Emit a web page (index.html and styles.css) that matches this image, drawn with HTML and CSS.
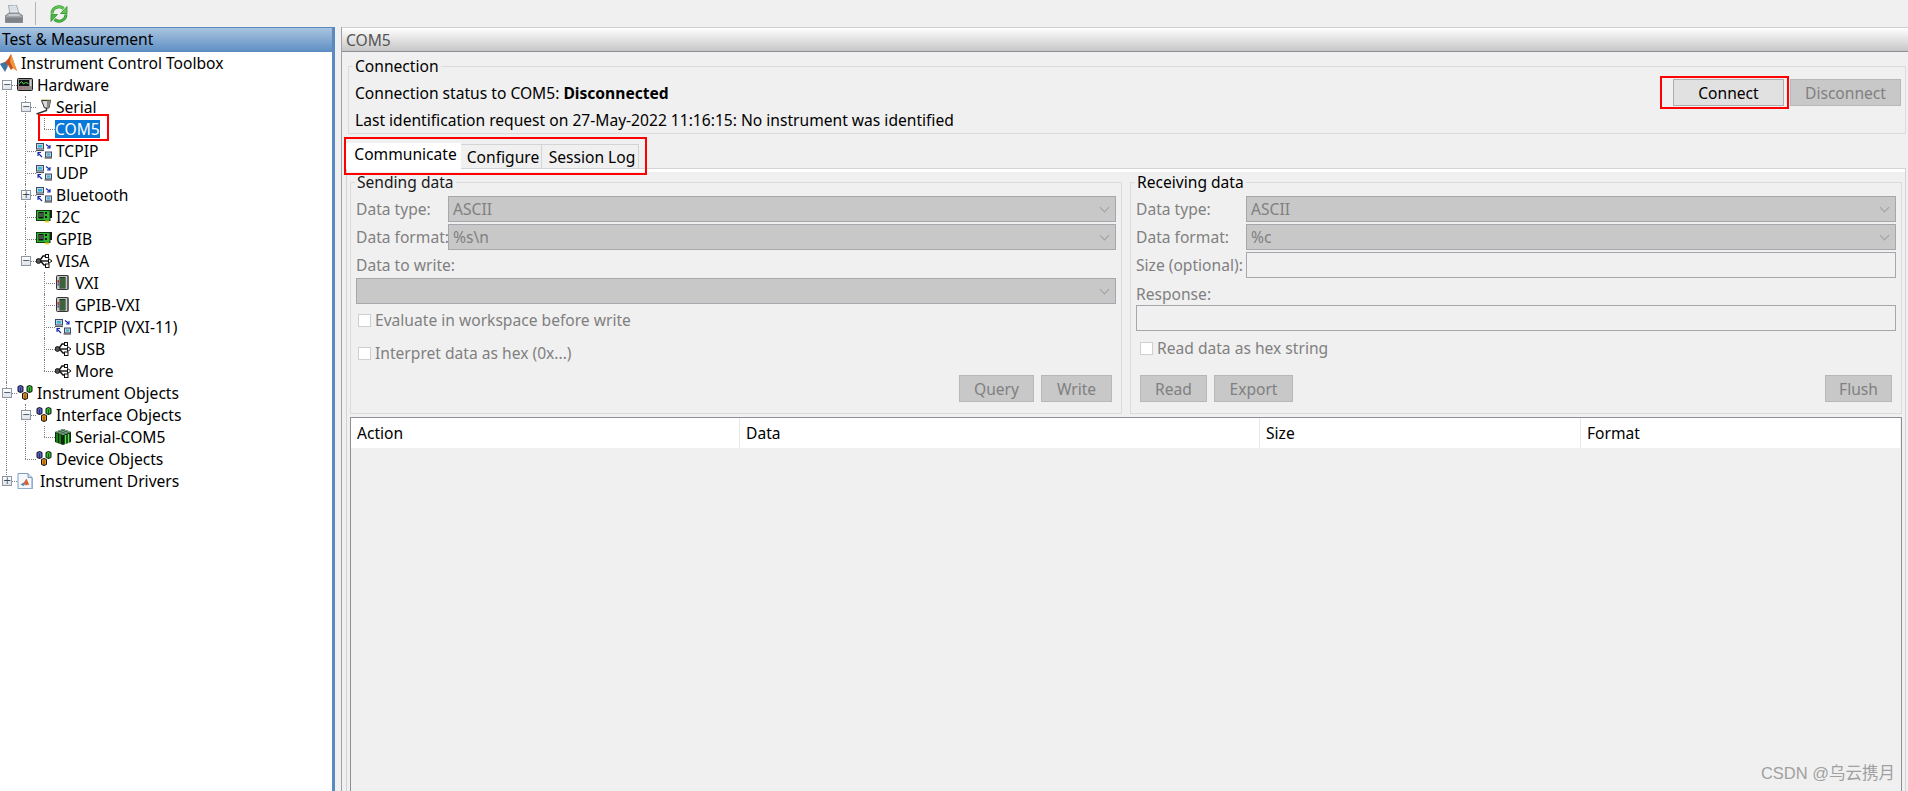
FILE: index.html
```html
<!DOCTYPE html>
<html lang="en">
  <head>
    <meta charset="utf-8">
    <title>Test &amp; Measurement</title>
    <link rel="stylesheet" href="styles.css">
  </head>
  <body>
    <svg class="defs" aria-hidden="true">
      <symbol id="i-print" viewBox="0 0 18 18">
        <path d="M3.5 .5l8-.5 2.5 9H5z" fill="#e3e9ef" stroke="#8d949c" stroke-width=".8"/>
        <path d="M5 3l6-.3M5.5 5l6-.3" stroke="#c3ccd6" stroke-width=".7"/>
        <path d="M0 11l4-3h10l4 3v6l-1.500 1H1.500L0 17z" fill="#a4a8ad" stroke="#74787e" stroke-width=".8"/>
        <path d="M.5 12.500h17V17l-1 .6H1.500L.5 17z" fill="#7f8389"/>
        <path d="M3.500 10h11" stroke="#e0e3e6" stroke-width="1.200"/>
      </symbol>
      <symbol id="i-refresh" viewBox="0 0 18 18">
        <path d="M2 8.500A7 7 0 0 1 13.500 3.500" fill="none" stroke="#2f8f2c" stroke-width="3"/>
        <path d="M2 8.500A7 7 0 0 1 13.500 3.500" fill="none" stroke="#5fc552" stroke-width="1.800"/>
        <path d="M17 1.500V8.500h-6.500z" fill="#5fc552" stroke="#2f8f2c" stroke-width=".8"/>
        <path d="M16 9.500A7 7 0 0 1 4.500 14.500" fill="none" stroke="#2f8f2c" stroke-width="3"/>
        <path d="M16 9.500A7 7 0 0 1 4.500 14.500" fill="none" stroke="#4ab544" stroke-width="1.800"/>
        <path d="M1 16.500V9.500h6.500z" fill="#4ab544" stroke="#2f8f2c" stroke-width=".8"/>
      </symbol>
      <symbol id="i-matlab" viewBox="0 0 17 18">
        <path d="M0 10l5-2 3-3 3-5 6 17-4-3-2 2-3-5-3 1z" fill="#c8501e"/>
        <path d="M11 0l6 17-4-3-3-6z" fill="#f0983a"/>
        <path d="M0 10l5-2 3 4-3 6z" fill="#3f76a8"/>
      </symbol>
      <symbol id="i-hw" viewBox="0 0 16 16">
        <rect x=".5" y="1.500" width="15" height="12" rx="1" fill="#8f8f8f" stroke="#1a1a1a"/>
        <rect x="2" y="3" width="10" height="6" fill="#101010"/>
        <path d="M2.500 6.500l2-2 2 2.500 2-1.500 3 1" fill="none" stroke="#4fe04f"/>
        <path d="M2 11h3M7 11h1M10 11h1" stroke="#e04040"/>
        <rect x="13" y="3" width="1.500" height="6" fill="#d0d0d0"/>
      </symbol>
      <symbol id="i-serial" viewBox="0 0 16 16">
        <path d="M5.500 1.500h9L13 9H8.500z" fill="#d8d8d8" stroke="#333"/>
        <path d="M11 1.500h3.500L13 9h-2z" fill="#8a8a8a"/>
        <path d="M5.500 .5h9" stroke="#c9b93a" stroke-dasharray="1 1"/>
        <path d="M10.500 9v2.500L.5 15" fill="none" stroke="#333" stroke-width="1.400"/>
      </symbol>
      <symbol id="i-net" viewBox="0 0 16 16">
        <rect x=".5" y=".5" width="7" height="5.500" fill="#c8cfd8" stroke="#3a4a6a"/>
        <rect x="2" y="2" width="4" height="2.500" fill="#30b8d8"/>
        <path d="M0 7.500h8" stroke="#555" stroke-width="1.200"/>
        <rect x="9.500" y="9" width="6" height="5" fill="#c8cfd8" stroke="#3a4a6a"/>
        <rect x="11" y="10.500" width="3" height="2" fill="#30b8d8"/>
        <path d="M8.500 15h7.500" stroke="#555" stroke-width="1.200"/>
        <path d="M10 1.500l4 3M14 2v3h-3M6 14L2 10M2 13V9.500h3" fill="none" stroke="#1428b0" stroke-width="1.100"/>
      </symbol>
      <symbol id="i-chip" viewBox="0 0 16 16">
        <rect x=".5" y="1.500" width="13.500" height="10" fill="#2fb52f" stroke="#103a10"/>
        <rect x="2.500" y="3" width="5" height="6.500" fill="#111"/>
        <path d="M3 5h4M3 7h4" stroke="#ddd" stroke-width=".6"/>
        <rect x="9" y="3" width="2" height="2" fill="#111"/>
        <rect x="9" y="7" width="2" height="2" fill="#111"/>
        <rect x="14" y="1" width="2" height="8" fill="#1a1a1a"/>
        <path d="M9 12.500h4" stroke="#e8d820" stroke-width="2"/>
      </symbol>
      <symbol id="i-usb" viewBox="0 0 16 16">
        <path d="M1 8h13" stroke="#111" stroke-width="1.400"/>
        <path d="M3.500 8l3.500-5h3M4.500 8l3.500 4h2" fill="none" stroke="#111" stroke-width="1.400"/>
        <circle cx="2.500" cy="8" r="2.400" fill="#555" stroke="#111"/>
        <path d="M12.500 5.500L16 8l-3.500 2.500z" fill="#fff" stroke="#111"/>
        <rect x="9.500" y="1.500" width="3" height="3" fill="#fff" stroke="#111"/>
        <rect x="9.500" y="11" width="3.500" height="3.500" fill="#fff" stroke="#111"/>
      </symbol>
      <symbol id="i-vxi" viewBox="0 0 16 16">
        <rect x="1.500" y=".5" width="12" height="14" rx="1" fill="#c4c4c4" stroke="#333"/>
        <rect x="4.500" y="2" width="6" height="11.500" fill="#1c3a1c"/>
        <path d="M5 4h5M5 6h5M5 8h5M5 10h5M5 12h5" stroke="#7fb07f" stroke-width=".7"/>
        <rect x="2.500" y="5" width="1.500" height="3" fill="#d03030"/>
        <rect x="2.500" y="8.500" width="1.500" height="2" fill="#3050c0"/>
        <rect x="12" y="1" width="2" height="13" fill="#666"/>
      </symbol>
      <symbol id="i-objs" viewBox="0 0 16 16">
        <path d="M1 1.500l2.500-1 2.500 1v5l-2.500 1-2.500-1z" fill="#5a5ed0" stroke="#111"/>
        <path d="M10 1.500l2.500-1 2.500 1v5l-2.500 1-2.500-1z" fill="#2fc02f" stroke="#111"/>
        <path d="M5.500 8.500l2.500-1 2.500 1v5l-2.500 1-2.500-1z" fill="#e8921f" stroke="#111"/>
        <path d="M3.500 2.500v5M12.500 2.500v5M8 9.500v5" stroke="#111" stroke-width=".6"/>
      </symbol>
      <symbol id="i-cube" viewBox="0 0 16 16">
        <path d="M0 3l8-3 8 3v10l-8 3-8-3z" fill="#0d2a0d"/>
        <path d="M0 3l8-3 8 3-8 3z" fill="#8fb59a"/>
        <path d="M3 1.800l8 3.200M6 .8l8 3.200M10 .8L2 4M13 1.800L5 5" stroke="#1e4a28" stroke-width=".6"/>
        <path d="M2 4.500v9M5 5.500v9.500" stroke="#1fae1f" stroke-width="1.300"/>
        <path d="M10.500 6v9M13.500 5v9" stroke="#55ea4f" stroke-width="1.500"/>
      </symbol>
      <symbol id="i-mdoc" viewBox="0 0 16 16">
        <path d="M1 .5h10l4 4v11H1z" fill="#f4f8fc" stroke="#7f9dbc"/>
        <path d="M11 .5v4h4" fill="#cbd9e8" stroke="#7f9dbc"/>
        <path d="M3.500 11.500l3.500-2 2.500-4 3 7-1.500-1-2 1-2-2z" fill="#d9602a"/>
        <path d="M3.500 11.500l3.500-2 1 2-1.500 1.500z" fill="#5c88b4"/>
        <path d="M15.500 5v10.500H2" fill="none" stroke="#8fb0d2" stroke-width="1.200"/>
      </symbol>
    </svg>

    <div class="toolbar">
      <svg class="tool-icon"><use href="#i-print"/></svg>
      <span class="tool-sep"></span>
      <svg class="tool-icon"><use href="#i-refresh"/></svg>
    </div>

    <div class="desktop">
      <div class="browser">
        <div class="browser-title">Test &amp; Measurement</div>
        <div class="tree-root"><svg class="logo"><use href="#i-matlab"/></svg><span>Instrument Control Toolbox</span></div>
        <ul class="tree top">
          <li>
            <div class="node"><b class="exp">&minus;</b><svg class="icon"><use href="#i-hw"/></svg><span>Hardware</span></div>
            <ul class="tree">
              <li>
                <div class="node"><b class="exp">&minus;</b><svg class="icon"><use href="#i-serial"/></svg><span>Serial</span></div>
                <ul class="tree">
                  <li><div class="node marked"><span class="selected">COM5</span></div></li>
                </ul>
              </li>
              <li><div class="node"><svg class="icon"><use href="#i-net"/></svg><span>TCPIP</span></div></li>
              <li><div class="node"><svg class="icon"><use href="#i-net"/></svg><span>UDP</span></div></li>
              <li><div class="node"><b class="exp">+</b><svg class="icon"><use href="#i-net"/></svg><span>Bluetooth</span></div></li>
              <li><div class="node"><svg class="icon"><use href="#i-chip"/></svg><span>I2C</span></div></li>
              <li><div class="node"><svg class="icon"><use href="#i-chip"/></svg><span>GPIB</span></div></li>
              <li>
                <div class="node"><b class="exp">&minus;</b><svg class="icon"><use href="#i-usb"/></svg><span>VISA</span></div>
                <ul class="tree">
                  <li><div class="node"><svg class="icon"><use href="#i-vxi"/></svg><span>VXI</span></div></li>
                  <li><div class="node"><svg class="icon"><use href="#i-vxi"/></svg><span>GPIB-VXI</span></div></li>
                  <li><div class="node"><svg class="icon"><use href="#i-net"/></svg><span>TCPIP (VXI-11)</span></div></li>
                  <li><div class="node"><svg class="icon"><use href="#i-usb"/></svg><span>USB</span></div></li>
                  <li><div class="node"><svg class="icon"><use href="#i-usb"/></svg><span>More</span></div></li>
                </ul>
              </li>
            </ul>
          </li>
          <li>
            <div class="node"><b class="exp">&minus;</b><svg class="icon"><use href="#i-objs"/></svg><span>Instrument Objects</span></div>
            <ul class="tree">
              <li>
                <div class="node"><b class="exp">&minus;</b><svg class="icon"><use href="#i-objs"/></svg><span>Interface Objects</span></div>
                <ul class="tree">
                  <li><div class="node"><svg class="icon"><use href="#i-cube"/></svg><span>Serial-COM5</span></div></li>
                </ul>
              </li>
              <li><div class="node"><svg class="icon"><use href="#i-objs"/></svg><span>Device Objects</span></div></li>
            </ul>
          </li>
          <li>
            <div class="node wide"><b class="exp">+</b><svg class="icon"><use href="#i-mdoc"/></svg><span>Instrument Drivers</span></div>
          </li>
        </ul>
      </div>

      <div class="detail">
        <div class="detail-title">COM5</div>
        <div class="detail-body">
          <fieldset class="group connection">
            <legend>Connection</legend>
            <div class="status-row">
              <span>Connection status to COM5: <strong>Disconnected</strong></span>
              <div class="conn-buttons">
                <button class="btn connect">Connect</button>
                <button class="btn off disconnect">Disconnect</button>
              </div>
            </div>
            <div class="last-id">Last identification request on 27-May-2022 11:16:15: No instrument was identified</div>
          </fieldset>

          <div class="tabs">
            <span class="tab active">Communicate</span>
            <span class="tab tab-config">Configure</span>
            <span class="tab tab-log">Session Log</span>
          </div>

          <div class="pane">
            <div class="columns">
              <fieldset class="group io send">
                <legend>Sending data</legend>
                <div class="field"><label>Data type:</label><div class="select">ASCII</div></div>
                <div class="field"><label>Data format:</label><div class="select">%s\n</div></div>
                <div class="caption">Data to write:</div>
                <div class="select"></div>
                <div class="check first"><i class="box"></i>Evaluate in workspace before write</div>
                <div class="check second"><i class="box"></i>Interpret data as hex (0x...)</div>
                <div class="actions end">
                  <button class="btn off query">Query</button>
                  <button class="btn off write">Write</button>
                </div>
              </fieldset>

              <fieldset class="group io receive">
                <legend>Receiving data</legend>
                <div class="field"><label>Data type:</label><div class="select">ASCII</div></div>
                <div class="field"><label>Data format:</label><div class="select">%c</div></div>
                <div class="field"><label>Size (optional):</label><div class="input"></div></div>
                <div class="caption">Response:</div>
                <div class="input"></div>
                <div class="check read-hex"><i class="box"></i>Read data as hex string</div>
                <div class="actions read-actions">
                  <button class="btn off read">Read</button>
                  <button class="btn off export">Export</button>
                  <button class="btn off flush">Flush</button>
                </div>
              </fieldset>
            </div>

            <div class="log">
              <div class="log-head">
                <span class="col-action">Action</span>
                <span class="col-data">Data</span>
                <span class="col-size">Size</span>
                <span class="col-format">Format</span>
              </div>
            </div>
          </div>
        </div>
      </div>
    </div>

    <div class="watermark">CSDN @乌云携月</div>
  </body>
</html>
```

FILE: styles.css
```css
* {
  margin: 0;
  padding: 0;
  box-sizing: border-box; }

html, body {
  height: 100%;
  overflow: hidden; }

body {
  background: #f0f0f0;
  font-family: "Noto Sans", "Noto Sans CJK SC", sans-serif;
  font-size: 15.6px;
  line-height: 20px;
  color: #000; }

.defs {
  display: none; }

/* toolbar */
.toolbar {
  height: 27px;
  display: flex;
  align-items: center;
  padding-left: 5px; }

.tool-icon {
  width: 18px;
  height: 18px; }

.tool-sep {
  width: 1px;
  height: 23px;
  background: #b4b4b4;
  margin: 0 14px 0 12px; }

.desktop {
  display: flex;
  height: 764px; }

/* left: tree browser */
.browser {
  width: 335px;
  flex: none;
  background: #fff;
  border-top: 1px solid #5b8bc0;
  border-right: 3px solid #5b8ac0; }

.browser-title {
  height: 24px;
  padding-left: 2px;
  line-height: 23px;
  background: linear-gradient(#a9c4df, #6090c4);
  border-bottom: 1px solid #5b8bc0; }

.tree-root {
  height: 22px;
  display: flex;
  align-items: center;
  gap: 4px; }

.logo {
  width: 17px;
  height: 18px;
  flex: none; }

.tree {
  list-style: none;
  padding-left: 19px; }

.tree.top {
  padding-left: 0; }

.tree li {
  position: relative; }

.tree li::before {
  content: "";
  position: absolute;
  left: 6px;
  top: 0;
  bottom: 0;
  border-left: 1px dotted #808080; }

.tree li:last-child::before {
  bottom: auto;
  height: 11px; }

.tree.top > li:first-child::before {
  top: 11px; }

.node {
  position: relative;
  height: 22px;
  display: flex;
  align-items: center;
  gap: 4px;
  padding-left: 17px; }

.node::before {
  content: "";
  position: absolute;
  left: 6px;
  width: 11px;
  top: 11px;
  border-top: 1px dotted #808080; }

.node.wide {
  gap: 7px; }

.icon {
  width: 16px;
  height: 16px;
  flex: none;
  position: relative; }

.exp {
  position: absolute;
  z-index: 1;
  left: 2px;
  top: 6px;
  width: 10px;
  height: 10px;
  background: linear-gradient(#fff, #dfe3e8);
  border: 1px solid #8d97a3;
  font: 10px/8px "DejaVu Sans", sans-serif;
  text-align: center;
  color: #3b4a5e; }

.selected {
  background: #0a78d7;
  color: #fff;
  height: 18px;
  line-height: 18px; }

.marked::after {
  content: "";
  position: absolute;
  left: 0;
  top: -4px;
  width: 67px;
  height: 23px;
  border: 2px solid #f00; }

/* right: instrument detail */
.detail {
  flex: 1;
  margin-left: 6px;
  border-left: 1px solid #a0a0a6; }

.detail-title {
  height: 25px;
  padding-left: 4px;
  line-height: 24px;
  color: #555;
  background: linear-gradient(#fff, #c6c6c6);
  border-top: 1px solid #cfcfcf;
  border-bottom: 1px solid #8e8e96; }

.detail-body {
  padding: 4px 2px 0 4px; }

.group {
  border: 1px solid #dcdcdc; }

.group legend {
  padding: 0 2px;
  height: 20px; }

.connection {
  height: 78px;
  margin-left: 2px;
  padding: 3px 4px 0 6px; }

.connection legend {
  margin-left: -2px; }

.status-row {
  display: flex;
  align-items: center;
  justify-content: space-between; }

.conn-buttons {
  display: flex;
  gap: 6px; }

.connect {
  position: relative;
  width: 111px; }

.connect::after {
  content: "";
  position: absolute;
  left: -14px;
  right: -6px;
  top: -4px;
  bottom: -4px;
  border: 2px solid #f00; }

.disconnect {
  width: 111px; }

.last-id {
  margin-top: 4px; }

.btn {
  height: 27px;
  font: inherit;
  color: #000;
  background: #e1e1e1;
  border: 1px solid #adadad; }

.btn.off {
  color: #808080;
  background: #c8c8c8;
  border-color: #b8b8b8; }

/* tabs */
.tabs {
  position: relative;
  z-index: 1;
  display: flex;
  align-items: flex-end;
  width: 293px;
  height: 26px;
  margin-top: 9px; }

.tabs::after {
  content: "";
  position: absolute;
  left: -2px;
  right: -8px;
  top: -6px;
  bottom: -6px;
  border: 2px solid #f00; }

.tab {
  height: 25px;
  padding-left: 4px;
  text-align: center;
  line-height: 25px;
  background: #f0f0f0;
  border: 1px solid #d4d4d4;
  border-left: 0; }

.tab.active {
  width: 115px;
  height: 26px;
  line-height: 23px;
  background: #fff;
  border: 0; }

.tab-config {
  width: 81px; }

.tab-log {
  width: 97px; }

.pane {
  margin-top: -1px;
  height: 640px;
  padding: 0 3px;
  border: 1px solid #d4d4d4; }

.pane::before {
  content: "";
  display: block;
  height: 3px;
  background: #fff;
  margin: 0 -3px; }

.columns {
  display: grid;
  grid-template-columns: 1fr 1fr;
  gap: 8px; }

.io {
  height: 242px;
  padding: 4px 5px 0; }

.io legend {
  margin-left: -1px; }

.send legend {
  color: #1a1a1a; }

.field {
  display: flex;
  height: 26px;
  margin-bottom: 2px;
  color: #808080; }

.field label {
  width: 92px;
  flex: none;
  line-height: 26px;
  white-space: nowrap; }

.receive .field label {
  width: 110px; }

.field .select, .field .input {
  flex: 1; }

.select {
  position: relative;
  height: 26px;
  padding-left: 4px;
  line-height: 24px;
  color: #808080;
  background: #c8c8c8;
  border: 1px solid #a6a6ac; }

.select::after {
  content: "";
  position: absolute;
  right: 7px;
  top: 7px;
  width: 6px;
  height: 6px;
  border-right: 1px solid #a0a0a0;
  border-bottom: 1px solid #a0a0a0;
  transform: rotate(45deg); }

.input {
  height: 26px;
  border: 1px solid #a6a6ac; }

.caption {
  height: 20px;
  margin: 5px 0 3px;
  color: #808080; }

.receive .caption {
  margin: 6px 0 1px; }

.check {
  display: flex;
  align-items: center;
  gap: 4px;
  height: 20px;
  color: #808080; }

.box {
  width: 13px;
  height: 13px;
  margin-left: 2px;
  background: #fff;
  border: 1px solid #cfcfcf; }

.check.first {
  margin-top: 6px; }

.check.second {
  margin-top: 13px; }

.check.read-hex {
  margin-top: 7px;
  margin-left: 2px; }

.actions {
  display: flex;
  gap: 7px;
  padding: 0 4px; }

.actions.end {
  justify-content: flex-end;
  margin-top: 12px; }

.read-actions {
  margin-top: 17px; }

.query {
  width: 75px; }

.write {
  width: 71px; }

.read {
  width: 67px; }

.export {
  width: 79px; }

.flush {
  width: 67px;
  margin-left: auto; }

/* log table */
.log {
  margin-top: 3px;
  height: 400px;
  border: 1px solid #8e8e96;
  border-bottom: 0; }

.log-head {
  height: 30px;
  display: flex;
  line-height: 30px;
  background: #fff;
  margin-right: 1px; }

.log-head span {
  padding-left: 6px;
  border-left: 1px solid #e8e8e8; }

.log-head .col-action {
  width: 388px;
  border-left: 0; }

.col-data {
  width: 520px; }

.col-size {
  width: 321px; }

.col-format {
  flex: 1; }

.watermark {
  position: absolute;
  right: 13px;
  bottom: 8px;
  font-family: "Liberation Sans", "Noto Sans CJK SC", sans-serif;
  font-size: 16.5px;
  color: #a0a0a0; }
```
